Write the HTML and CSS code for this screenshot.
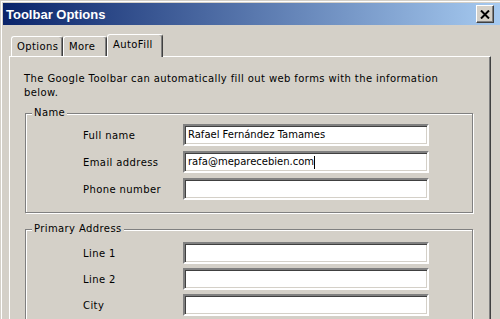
FILE: index.html
```html
<!DOCTYPE html>
<html lang="en">
<head>
  <meta charset="UTF-8" />
  <title>Toolbar Options</title>
  <link rel="stylesheet" href="styles.css">
</head>
<body>

  <div class="window">
    <div class="titlebar">
      <span class="title">Toolbar Options</span>
      <span class="close-btn">
        <svg width="10" height="9" viewBox="0 0 10 9">
          <path d="M1 0.5 L9 8.5 M9 0.5 L1 8.5" stroke="#000" stroke-width="2" fill="none" />
        </svg>
      </span>
    </div>

    <div class="dialog">
      <!-- Tabs -->
      <div class="tabs">
        <div class="tab tab-options">Options</div>
        <div class="tab tab-more">More</div>
        <div class="tab tab-active">AutoFill</div>
      </div>

      <div class="panel">
        <p class="intro">The Google Toolbar can automatically fill out web forms with the information below.</p>

        <fieldset class="group group-name">
          <legend>Name</legend>
          <div class="fields">
            <label>Full name</label>
            <div class="field">Rafael Fernández Tamames</div>
            <label>Email address</label>
            <div class="field">rafa@meparecebien.com<span class="caret"></span></div>
            <label>Phone number</label>
            <div class="field"></div>
          </div>
        </fieldset>

        <fieldset class="group group-address">
          <legend>Primary Address</legend>
          <div class="fields">
            <label>Line 1</label>
            <div class="field"></div>
            <label>Line 2</label>
            <div class="field"></div>
            <label>City</label>
            <div class="field"></div>
          </div>
        </fieldset>
      </div>
    </div>
  </div>

</body>
</html>
```

FILE: styles.css
```css
body {
  margin: 0;
  background: #d4d0c8;
  font-family: 'DejaVu Sans', Verdana, sans-serif;
  font-size: 10px;
  letter-spacing: 0.4px;
  color: #000;
  overflow: hidden;
}

.window {
  height: 319px;
  padding: 3px 0 0 3px;
  box-shadow: inset 1px 1px #d4d0c8, inset 2px 2px #fff;
}

.titlebar {
  height: 22px;
  display: flex;
  align-items: center;
  justify-content: space-between;
  padding: 0 6px 0 3px;
  background: linear-gradient(to right, #0a246a, #a6caf0);
  color: #fff;
  font-family: 'Liberation Sans', Arial, sans-serif;
  font-size: 13px;
  font-weight: bold;
  letter-spacing: 0;
}

.close-btn {
  width: 18px;
  height: 18px;
  box-sizing: border-box;
  display: flex;
  align-items: center;
  justify-content: center;
  background: #d4d0c8;
  border: 1px solid;
  border-color: #fff #404040 #404040 #fff;
  box-shadow: inset -1px -1px #808080;
}

.dialog {
  padding: 9px 0 0 6px;
}

.tabs {
  display: flex;
  align-items: flex-end;
  height: 22px;
  padding-left: 2px;
  position: relative;
  z-index: 1;
}

.tab {
  height: 20px;
  box-sizing: border-box;
  padding: 3px 0 0 5px;
  line-height: 13px;
  border-top: 1px solid #fff;
  border-left: 1px solid #fff;
  border-right: 1px solid #404040;
  box-shadow: inset -1px 0 #808080;
  border-radius: 3px 3px 0 0;
}

.tab-options {
  width: 52px;
}

.tab-more {
  width: 44px;
}

.tab-active {
  width: 56px;
  height: 23px;
  margin-bottom: -1px;
  padding-top: 3px;
  background: #d4d0c8;
}

.panel {
  width: 482px;
  height: 300px;
  box-sizing: border-box;
  padding: 15px 0 0 14px;
  border-top: 1px solid #fff;
  border-left: 1px solid #fff;
  border-right: 1px solid #404040;
  box-shadow: inset -1px 0 #808080;
}

.intro {
  width: 430px;
  margin: 0 0 6px;
  line-height: 14px;
}

.group {
  width: 448px;
  box-sizing: border-box;
  margin: 0 0 0 1px;
  padding: 4px 0 12px 0;
  border: 1px solid #808080;
  box-shadow: inset 1px 1px #fff, 1px 1px #fff;
  min-inline-size: 0;
}

.group legend {
  margin-left: 6px;
  padding: 0 2px;
  line-height: 14px;
  background: #d4d0c8;
  position: relative;
}

.group-address {
  margin-top: 9px;
  padding-top: 6px;
}

.fields {
  display: grid;
  grid-template-columns: 100px 246px;
  align-items: center;
  row-gap: 5px;
  padding-left: 57px;
}

.group-address .fields {
  row-gap: 4px;
}

.field {
  height: 22px;
  box-sizing: border-box;
  padding: 0 3px;
  line-height: 18px;
  letter-spacing: 0;
  white-space: nowrap;
  background: #fff;
  border: 2px solid;
  border-color: #808080 #fff #fff #808080;
  box-shadow: inset 1px 1px #404040, inset -1px -1px #d4d0c8;
}

.caret {
  display: inline-block;
  width: 1px;
  height: 13px;
  background: #000;
  vertical-align: middle;
}
```
